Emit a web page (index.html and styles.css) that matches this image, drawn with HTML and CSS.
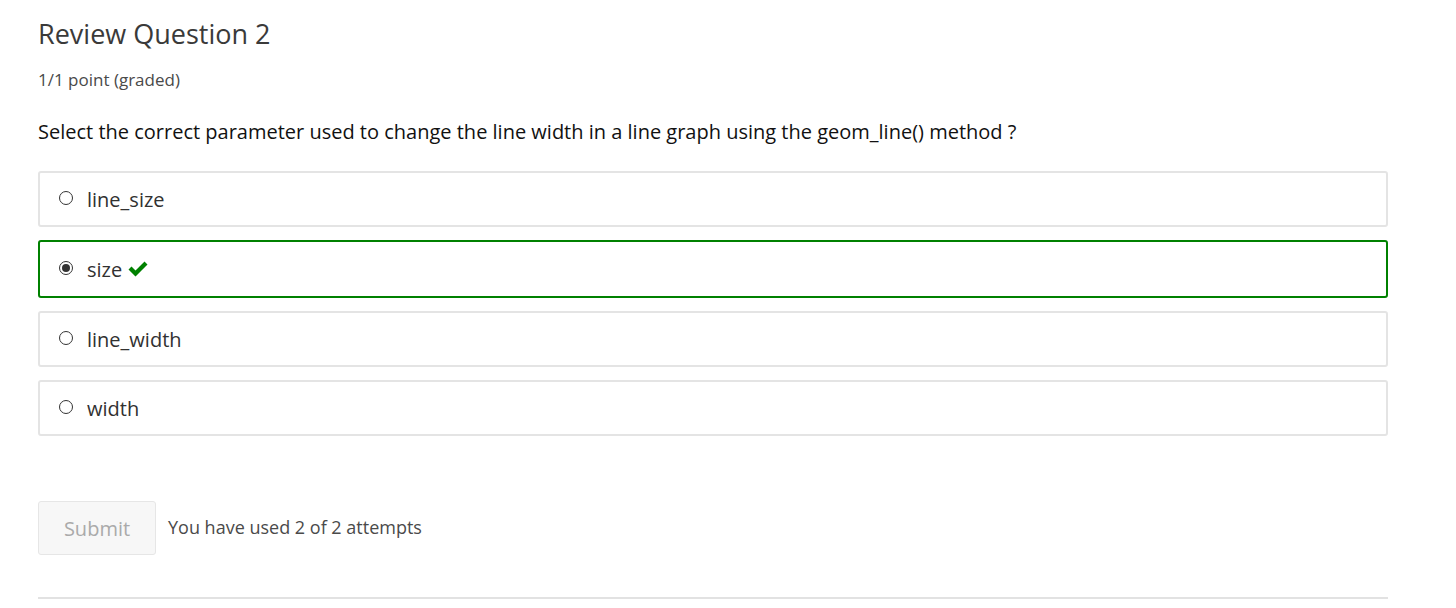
FILE: index.html
```html
<!DOCTYPE html>
<html>
<head>
<meta charset="utf-8">
<link rel="stylesheet" href="styles.css">
</head>
<body>
<div class="problem">
  <h2 class="title">Review Question 2</h2>
  <div class="points">1/1 point (graded)</div>
  <p class="question">Select the correct parameter used to change the line width in a line graph using the geom_line() method ?</p>
  <div class="choices">
    <label class="choice"><span class="radio"></span><span class="label">line_size</span></label>
    <label class="choice correct"><span class="radio checked"></span><span class="label">size</span>
      <svg class="check" width="22" height="18" viewBox="0 0 22 18"><path d="M1.5 9.5 L4.5 6.5 L8.5 10.5 L17.5 1.5 L20.5 4.5 L8.5 16.5 Z" fill="#008100"/></svg>
    </label>
    <label class="choice"><span class="radio"></span><span class="label">line_width</span></label>
    <label class="choice"><span class="radio"></span><span class="label">width</span></label>
  </div>
  <div class="actions">
    <button class="submit" disabled>Submit</button>
    <span class="attempts">You have used 2 of 2 attempts</span>
  </div>
  <hr class="divider">
</div>
</body>
</html>
```
FILE: styles.css
```css
html, body { margin: 0; padding: 0; background: #fff; }
body { font-family: "Open Sans", "Liberation Sans", sans-serif; color: #313131; }
.problem { padding: 0 68px 0 38px; }
.title { margin: 0; padding-top: 17px; font-size: 27px; font-weight: 400; line-height: 34px; color: #3a3a3a; }
.points { margin-top: 18px; font-size: 17px; line-height: 22px; color: #4a4a4a; }
.question { margin: 27px 0 0; font-size: 20px; line-height: 28px; color: #111; }
.choices { margin-top: 25px; display: flex; flex-direction: column; gap: 13px; }
.choice { display: flex; align-items: center; height: 52px; border: 2px solid #e4e4e4; border-radius: 3px; padding: 0 18px; font-size: 20px; color: #313131; }
.choice.correct { border-color: #008100; height: 54px; }
.radio { width: 14px; height: 14px; border: 1px solid #333; border-radius: 50%; box-sizing: border-box; margin: 0 14px 2px 1px; position: relative; flex: none; }
.radio.checked::after { content: ""; position: absolute; left: 2px; top: 2px; width: 8px; height: 8px; border-radius: 50%; background: #333; }
.check { margin-left: 5px; }
.actions { margin-top: 65px; display: flex; align-items: center; gap: 12px; }
.submit { font-family: inherit; font-size: 20px; color: #aaa; background: #f7f7f7; border: 1px solid #e6e6e6; border-radius: 3px; width: 118px; height: 54px; padding: 0; }
.attempts { font-size: 18px; color: #4a4a4a; margin-bottom: 3px; }
.divider { margin: 42px 0 0; border: 0; border-top: 2px solid #e2e2e2; }
```
